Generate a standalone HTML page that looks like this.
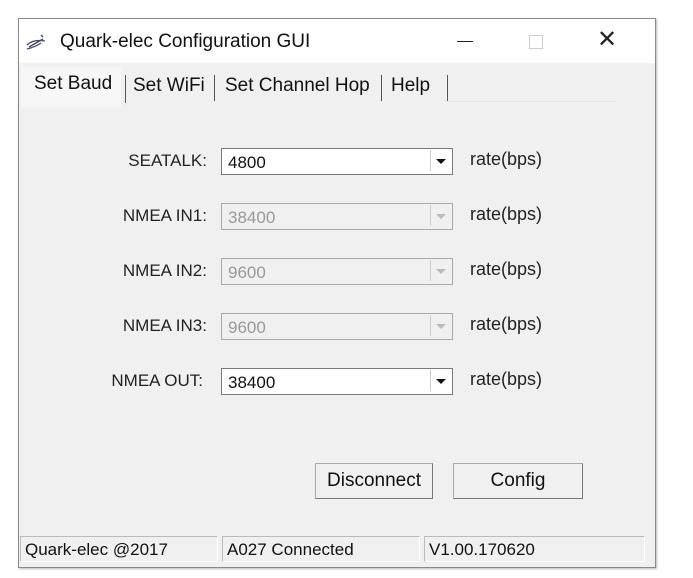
<!DOCTYPE html>
<html><head><style>
body{margin:0;width:693px;height:578px;background:#fff;position:relative;overflow:hidden;font-family:"Liberation Sans",sans-serif;}
.win{position:absolute;left:18px;top:18px;width:636px;height:548px;background:#f0f0f0;border:1px solid #8a8a8a;box-shadow:1px 1px 2px #bbb;}
.title{position:absolute;left:0;top:0;width:636px;height:44px;background:#fff;}
.title .t{position:absolute;left:41px;top:12px;font-size:19px;color:#111;}
.ab{position:absolute;color:#222;}
.tab{position:absolute;top:52px;height:30px;font-size:19px;color:#111;line-height:30px;}
.lbl{position:absolute;width:124px;text-align:right;font-size:17px;color:#222;}
.cb{position:absolute;left:202px;width:230px;height:25px;border:1px solid #7a7a7a;background:#fff;}
.cb.d{background:#f0f0f0;border-color:#aaa;}
.cb span{position:absolute;left:6px;top:4px;font-size:17px;color:#111;}
.cb.d span{color:#999;}
.cb .arr{position:absolute;right:1px;top:1px;width:20px;height:21px;border-left:1px solid #ccc;}
.cb .arr:after{content:"";position:absolute;left:5px;top:9px;border-left:5px solid transparent;border-right:5px solid transparent;border-top:5px solid #111;}
.cb.d .arr:after{border-top-color:#bbb;}
.rate{position:absolute;left:451px;font-size:18px;color:#222;}
.btn{position:absolute;top:444px;height:34px;border:1px solid #aaa;border-right-color:#777;border-bottom-color:#777;background:#f0f0f0;font-size:19px;text-align:center;line-height:34px;color:#111;}
.sb{position:absolute;top:517px;height:26px;border:1px solid #bbb;border-right-color:#fff;border-bottom-color:#fff;font-size:17px;line-height:26px;padding-left:4px;color:#111;box-sizing:border-box;}
</style></head><body>
<div class="win">
 <div class="title">
  <svg style="position:absolute;left:6px;top:14px" width="24" height="18"><path d="M2 12 Q8 6 20 8 M4 14 L18 6 M16 2 L18 4 M2 16 Q10 14 16 10" stroke="#446" stroke-width="1.3" fill="none"/></svg>
  <div class="t">Quark-elec Configuration GUI</div>
  <div class="ab" style="left:438px;top:22px;width:16px;height:1px;background:#222"></div>
  <div class="ab" style="left:510px;top:16px;width:12px;height:12px;border:1px solid #ccc"></div>
  <div class="ab" style="left:578px;top:6px;font-size:24px;font-weight:300">✕</div>
 </div>
 <div style="position:absolute;left:2px;top:48px;width:100px;height:40px;background:#f7f7f7"></div>
 <div class="tab" style="left:15px;top:50px">Set Baud</div>
 <div style="position:absolute;left:106px;top:56px;width:1px;height:28px;background:#555"></div>
 <div class="tab" style="left:114px">Set WiFi</div>
 <div style="position:absolute;left:195px;top:56px;width:1px;height:26px;background:#555"></div>
 <div class="tab" style="left:206px">Set Channel Hop</div>
 <div style="position:absolute;left:362px;top:56px;width:1px;height:26px;background:#555"></div>
 <div class="tab" style="left:372px">Help</div>
 <div style="position:absolute;left:428px;top:56px;width:1px;height:26px;background:#555"></div>
 <div style="position:absolute;left:429px;top:82px;width:168px;height:1px;background:#e4e4e4"></div>

 <div class="lbl" style="left:64px;top:132px">SEATALK:</div>
 <div class="cb" style="top:129px"><span>4800</span><div class="arr"></div></div>
 <div class="rate" style="top:130px">rate(bps)</div>

 <div class="lbl" style="left:64px;top:187px">NMEA IN1:</div>
 <div class="cb d" style="top:184px"><span>38400</span><div class="arr"></div></div>
 <div class="rate" style="top:185px">rate(bps)</div>

 <div class="lbl" style="left:64px;top:242px">NMEA IN2:</div>
 <div class="cb d" style="top:239px"><span>9600</span><div class="arr"></div></div>
 <div class="rate" style="top:240px">rate(bps)</div>

 <div class="lbl" style="left:64px;top:297px">NMEA IN3:</div>
 <div class="cb d" style="top:294px"><span>9600</span><div class="arr"></div></div>
 <div class="rate" style="top:295px">rate(bps)</div>

 <div class="lbl" style="left:60px;top:352px">NMEA OUT:</div>
 <div class="cb" style="top:349px"><span>38400</span><div class="arr"></div></div>
 <div class="rate" style="top:350px">rate(bps)</div>

 <div class="btn" style="left:296px;width:116px">Disconnect</div>
 <div class="btn" style="left:434px;width:128px">Config</div>

 <div class="sb" style="left:1px;width:198px">Quark-elec @2017</div>
 <div class="sb" style="left:203px;width:198px">A027 Connected</div>
 <div class="sb" style="left:405px;width:221px">V1.00.170620</div>
</div>
</body></html>
